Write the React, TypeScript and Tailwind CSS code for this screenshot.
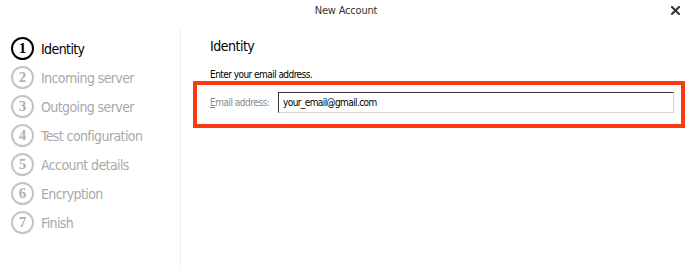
import React from "react";

const steps = [
  "Identity",
  "Incoming server",
  "Outgoing server",
  "Test configuration",
  "Account details",
  "Encryption",
  "Finish",
];

const tahoma = { fontFamily: '"DejaVu Sans Condensed", "DejaVu Sans", sans-serif', fontStretch: "condensed" as const };

export default function App() {
  return (
    <div
      className="w-[690px] h-[267px] bg-white flex flex-col overflow-hidden"
      style={tahoma}
    >
      <div className="h-[28px] flex items-start justify-between pt-[4px] px-[8px]">
        <div className="w-[14px]" />
        <div className="text-[11px] leading-[14px] text-[#333] ml-[2px] tracking-[-0.2px]">New Account</div>
        <div className="w-[14px] flex justify-center pt-[2px]">
          <svg width="9" height="9" viewBox="0 0 9 9">
            <path d="M1 1 L8 8 M8 1 L1 8" stroke="#333" strokeWidth="2" strokeLinecap="square" />
          </svg>
        </div>
      </div>
      <div className="flex flex-1">
        <div className="w-[181px] border-r border-[#f0f0f0] pt-[6px] pl-[11px] flex flex-col">
          {steps.map((s, i) => (
            <div key={s} className="h-[29px] flex items-center gap-[7px]">
              <div
                className={
                  "w-[23px] h-[23px] rounded-full border-2 flex items-center justify-center text-[15px] font-bold leading-none " +
                  (i === 0 ? "border-black text-black" : "border-[#c4c4c4] text-[#b0b0b0]")
                }
                style={{ fontFamily: '"Liberation Serif", "Times New Roman", serif' }}
              >
                {i + 1}
              </div>
              <div
                className={
                  "text-[14px] leading-[16px] tracking-[-0.6px] " + (i === 0 ? "text-black" : "text-[#a9a9a9]")
                }
              >
                {s}
              </div>
            </div>
          ))}
        </div>
        <div className="flex-1 pl-[12px] pt-[10px]">
          <div className="pl-[17px] text-[14px] leading-[16px] tracking-[-0.5px] text-black">Identity</div>
          <div className="pl-[17px] mt-[15px] text-[10px] leading-[12px] tracking-[-0.55px] text-black">
            Enter your email address.
          </div>
          <div className="w-[492px] h-[47px] border-4 border-[#fe3a12] flex items-start pt-[7px] pl-[13px]">
            <div className="w-[68px] h-[21px] flex items-center text-[10px] tracking-[-0.5px] text-[#8a8a8a]">
              <span className="underline">E</span>mail address:
            </div>
            <div className="w-[396px] h-[21px] border-t border-l border-t-[#333] border-l-[#333] border-r border-b border-r-[#d6d3ce] border-b-[#d6d3ce] flex items-center pl-[4px] text-[10px] tracking-[-0.6px] text-black">
              your_email@gmail.com
            </div>
          </div>
        </div>
      </div>
    </div>
  );
}
